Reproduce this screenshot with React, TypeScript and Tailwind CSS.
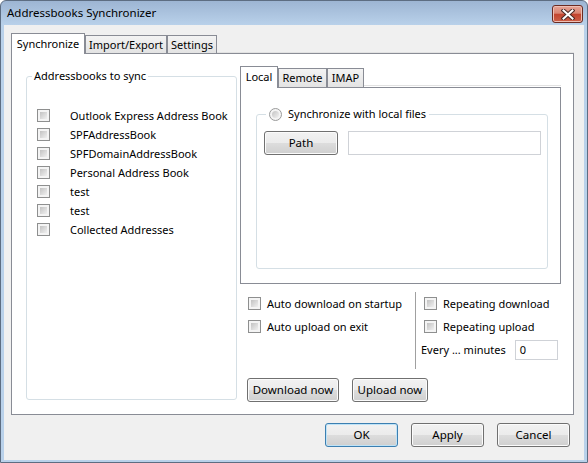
const books = [
  "Outlook Express Address Book",
  "SPFAddressBook",
  "SPFDomainAddressBook",
  "Personal Address Book",
  "test",
  "test",
  "Collected Addresses",
];

function CheckBox() {
  return (
    <span className="box-border flex h-[13px] w-[13px] shrink-0 border border-[#8e8f8f] bg-[#f4f4f4] p-[2px]">
      <span className="h-full w-full bg-[linear-gradient(135deg,#c2c2c2,#f0f0f0)]" />
    </span>
  );
}

function Radio() {
  return (
    <span className="box-border flex h-[13px] w-[13px] shrink-0 items-center justify-center rounded-full border border-[#9a9b9b] bg-[#f4f4f4]">
      <span className="h-[7px] w-[7px] rounded-full bg-[linear-gradient(135deg,#c3c3c3,#f2f2f2)]" />
    </span>
  );
}

function Button({ label, w, primary }: { label: string; w: string; primary?: boolean }) {
  return (
    <button
      className={
        "box-border flex h-[24px] items-center justify-center rounded-[3px] border bg-[linear-gradient(to_bottom,#f2f2f2_0%,#ebebeb_50%,#dddddd_50%,#cfcfcf_100%)] text-[11.5px] leading-[16px] text-black " +
        w +
        (primary
          ? " border-[#3c7fb1] shadow-[inset_0_0_0_1px_#bfe3f7]"
          : " border-[#707070] shadow-[inset_0_0_0_1px_#fbfbfb]")
      }
    >
      {label}
    </button>
  );
}

function Tab({ label, w, active, tall }: { label: string; w: string; active?: boolean; tall?: boolean }) {
  if (active) {
    return (
      <div
        className={
          "relative z-10 -mb-px box-border flex shrink-0 items-start justify-center border border-b-0 border-[#898c95] bg-white pt-[2px] " +
          w +
          (tall ? " h-[22px]" : " h-[21px]")
        }
      >
        {label}
      </div>
    );
  }
  return (
    <div
      className={
        "box-border flex shrink-0 items-start justify-center border border-b-0 border-[#898c95] bg-[linear-gradient(to_bottom,#f3f3f3,#e3e3e3)] pt-[1px] " +
        w +
        (tall ? " h-[19px]" : " h-[18px]")
      }
    >
      {label}
    </div>
  );
}

export default function App() {
  return (
    <div className="box-border flex h-[463px] w-[588px] flex-col rounded-t-[6px] border border-[#5d6d82] bg-[linear-gradient(to_bottom,#9db5d3_0px,#b9d1ea_24px,#b9d1ea_100%)] px-[3px] pb-[2px] font-['Noto_Sans',sans-serif] text-[11px] leading-[16px] text-black">
      {/* title bar */}
      <div className="flex h-[24px] shrink-0 items-start">
        <div className="flex h-[24px] items-center pl-[3px] text-[11.5px]">Addressbooks Synchronizer</div>
        <div className="mr-[1px] ml-auto mt-[4px] box-border flex h-[18px] w-[31px] items-center justify-center rounded-[3px] border border-[#6b2b22] bg-[linear-gradient(to_bottom,#e6a597_0%,#d98472_45%,#c3452f_52%,#cc6048_100%)] shadow-[inset_0_0_0_1px_#eebfb4]">
          <svg width="14" height="11" viewBox="0 0 14 11">
            <path d="M2.5 1.5 L11.5 9.5 M11.5 1.5 L2.5 9.5" stroke="#4a2a26" strokeWidth="4" strokeLinecap="square" />
            <path d="M2.5 1.5 L11.5 9.5 M11.5 1.5 L2.5 9.5" stroke="#ffffff" strokeWidth="2" strokeLinecap="square" />
          </svg>
        </div>
      </div>

      {/* client area */}
      <div className="flex flex-1 flex-col bg-[#f0f0f0]">
        <div className="ml-[7px] mt-[8px] flex h-[20px] w-[563px] items-end">
          <Tab label="Synchronize" w="w-[74px]" active />
          <Tab label="Import/Export" w="w-[82px]" />
          <Tab label="Settings" w="w-[50px]" />
          <div className="h-full flex-1 border-b border-[#e2e2e2]" />
        </div>

        <div className="ml-[7px] box-border flex h-[362px] w-[563px] border border-[#898c95] bg-white">
          <fieldset className="ml-[14px] mt-[14px] box-border h-[332px] w-[211px] min-w-0 shrink-0 rounded-[3px] border border-[#d5dfe5] p-0">
            <legend className="ml-[5px] px-[2px] leading-[16px]">Addressbooks to sync</legend>
            <div className="flex flex-col pl-[10px] pt-[22px]">
              {books.map((b, i) => (
                <div key={i} className="flex h-[19px] items-center gap-[20px]">
                  <CheckBox />
                  <span className="whitespace-nowrap">{b}</span>
                </div>
              ))}
            </div>
          </fieldset>

          <div className="ml-[3px] mt-[12px] flex w-[321px] shrink-0 flex-col">
            <div className="flex h-[21px] items-end">
              <Tab label="Local" w="w-[38px]" active tall />
              <Tab label="Remote" w="w-[49px]" tall />
              <Tab label="IMAP" w="w-[37px]" tall />
              <div className="mb-[1px] h-full flex-1 border-b border-[#e2e2e2]" />
            </div>
            <div className="box-border h-[197px] w-[321px] border border-[#898c95] bg-white">
              <fieldset className="ml-[15px] mt-[18px] box-border h-[163px] w-[292px] min-w-0 rounded-[3px] border border-[#d5dfe5] p-0">
                <legend className="ml-[9px] flex items-center gap-[6px] px-[3px] leading-[16px]">
                  <Radio />
                  <span>Synchronize with local files</span>
                </legend>
                <div className="flex gap-[10px] pl-[7px] pt-[9px]">
                  <Button label="Path" w="w-[74px]" />
                  <div className="box-border h-[24px] w-[193px] border border-[#cfd2d7] bg-white" />
                </div>
              </fieldset>
            </div>

            <div className="mt-[8px] flex h-[77px]">
              <div className="flex w-[175px] flex-col pl-[8px]">
                <div className="flex h-[23px] items-center gap-[6px]">
                  <CheckBox />
                  <span className="whitespace-nowrap">Auto download on startup</span>
                </div>
                <div className="flex h-[23px] items-center gap-[6px]">
                  <CheckBox />
                  <span className="whitespace-nowrap">Auto upload on exit</span>
                </div>
              </div>
              <div className="w-px bg-[#a0a0a0]" />
              <div className="flex flex-col">
                <div className="flex h-[23px] items-center gap-[6px] pl-[8px]">
                  <CheckBox />
                  <span className="whitespace-nowrap">Repeating download</span>
                </div>
                <div className="flex h-[23px] items-center gap-[6px] pl-[8px]">
                  <CheckBox />
                  <span className="whitespace-nowrap">Repeating upload</span>
                </div>
                <div className="flex h-[23px] items-center gap-[9px] pl-[5px]">
                  <span className="whitespace-nowrap">Every ... minutes</span>
                  <div className="box-border flex h-[20px] w-[43px] items-center border border-[#cfd2d7] bg-white pl-[4px]">0</div>
                </div>
              </div>
            </div>

            <div className="mt-[9px] flex gap-[13px] pl-[7px]">
              <Button label="Download now" w="w-[92px]" />
              <Button label="Upload now" w="w-[76px]" />
            </div>
          </div>
        </div>

        <div className="mt-[8px] flex justify-end gap-[13px] pr-[14px]">
          <Button label="OK" w="w-[73px]" primary />
          <Button label="Apply" w="w-[73px]" />
          <Button label="Cancel" w="w-[73px]" />
        </div>
      </div>
    </div>
  );
}
